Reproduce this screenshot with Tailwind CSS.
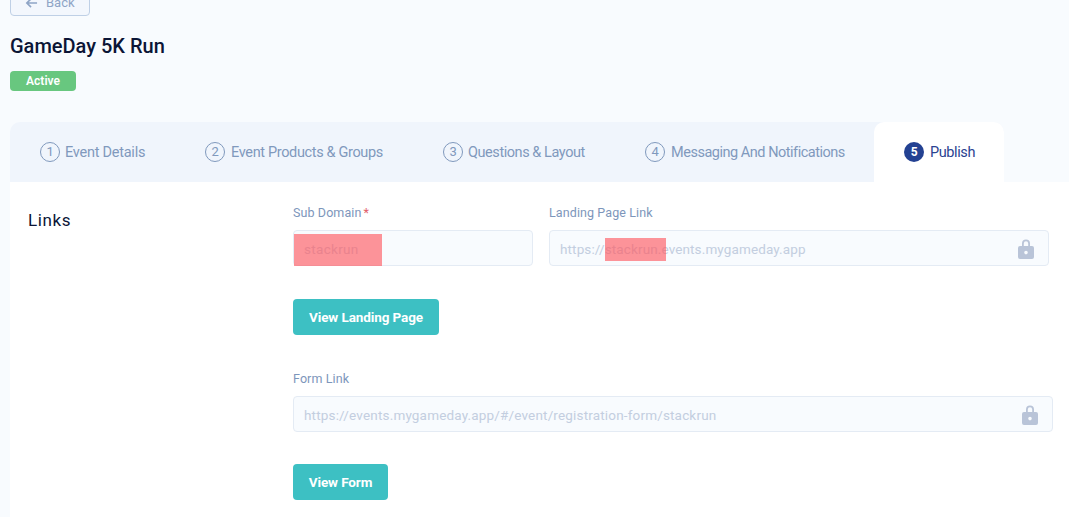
<!DOCTYPE html>
<html lang="en">
<head>
  <meta charset="UTF-8">
  <title>GameDay 5K Run</title>
  <script src="https://cdn.jsdelivr.net/npm/@tailwindcss/browser@4"></script>
</head>
<body class="bg-[#f8fbfe] font-['Roboto',sans-serif] h-[517px] overflow-hidden">

  <!-- page header -->
  <div class="pl-[10px]">
    <button class="mt-[-12px] h-[28px] w-[80px] flex items-center gap-[8px] pl-[14px] pt-[2px] border border-[#bfd0e6] rounded-[4px] bg-[#f3f7fd] text-[#8fa5c6] text-[13px]">
      <svg width="13" height="12" viewBox="0 0 14 12" fill="none" stroke="#8fa5c6" stroke-width="1.8"><path d="M13 6H2M6.500 1.500L2 6l4.500 4.500"/></svg>
      <span>Back</span>
    </button>
    <h1 class="mt-[18px] h-[24px] leading-[24px] text-[20px] font-medium text-[#0b1536]">GameDay 5K Run</h1>
    <span class="mt-[13px] flex items-center justify-center w-[66px] h-[20px] rounded-[4px] bg-[#68c77f] text-white text-[12px] font-semibold">Active</span>
  </div>

  <!-- tabs -->
  <div class="mt-[31px] ml-[10px] w-[994px] h-[60px] flex bg-[#f0f5fc] rounded-t-[10px] text-[14.500px] text-[#8099bd]">
    <div class="px-[30px] w-[165px] flex items-center gap-[5px] whitespace-nowrap tracking-[-0.25px]">
      <span class="w-[20px] h-[20px] shrink-0 rounded-full border border-[#8099bd] flex items-center justify-center text-[13px]">1</span><span class="translate-y-px">Event Details</span>
    </div>
    <div class="px-[30px] w-[238px] flex items-center gap-[6px] whitespace-nowrap tracking-[-0.35px]">
      <span class="w-[20px] h-[20px] shrink-0 rounded-full border border-[#8099bd] flex items-center justify-center text-[13px]">2</span><span class="translate-y-px">Event Products &amp; Groups</span>
    </div>
    <div class="px-[30px] w-[202px] flex items-center gap-[5px] whitespace-nowrap tracking-[-0.44px]">
      <span class="w-[20px] h-[20px] shrink-0 rounded-full border border-[#8099bd] flex items-center justify-center text-[13px]">3</span><span class="translate-y-px">Questions &amp; Layout</span>
    </div>
    <div class="px-[30px] w-[259px] flex items-center gap-[6px] whitespace-nowrap tracking-[-0.48px]">
      <span class="w-[20px] h-[20px] shrink-0 rounded-full border border-[#8099bd] flex items-center justify-center text-[13px]">4</span><span class="translate-y-px">Messaging And Notifications</span>
    </div>
    <div class="px-[30px] w-[130px] flex items-center gap-[6px] whitespace-nowrap tracking-[-0.4px] bg-white rounded-t-[10px] text-[#2a4391]">
      <span class="w-[20px] h-[20px] shrink-0 rounded-full bg-[#234192] text-white flex items-center justify-center text-[12px] font-bold">5</span><span class="translate-y-px">Publish</span>
    </div>
  </div>

  <!-- panel -->
  <div class="ml-[10px] h-[335px] bg-white pl-[18px] flex">
    <div class="w-[265px] pt-[28px] text-[17px] leading-[20px] tracking-[0.6px] text-[#0b1536]">Links</div>
    <div class="pt-[22px]">
      <div class="flex gap-[16px]">
        <div class="w-[240px]">
          <label class="block h-[18px] leading-[18px] text-[12.500px] tracking-[0.1px] text-[#7d96bb]">Sub Domain<span class="ml-[2px] text-[#e2606a]">*</span></label>
          <div class="relative mt-[8px] h-[36px] flex items-center pl-[10px] border border-[#e4ebf4] rounded-[4px] bg-[#f8fbfe] text-[13.500px] tracking-[0.3px] text-[#c3cee0]">
            <span class="translate-y-px">stackrun</span>
            <span class="absolute left-0 top-[3px] w-[88px] h-[32px] bg-[#fe5a63]/65"></span>
          </div>
        </div>
        <div class="w-[500px]">
          <label class="block h-[18px] leading-[18px] text-[12.500px] tracking-[0.1px] text-[#7d96bb]">Landing Page Link</label>
          <div class="relative mt-[8px] h-[36px] flex items-center justify-between pl-[10px] pr-[14px] border border-[#e4ebf4] rounded-[4px] bg-[#f8fbfe] text-[13.500px] tracking-[0.12px] text-[#c3cee0]">
            <span class="translate-y-px">https://stackrun.events.mygameday.app</span>
            <svg width="16" height="21" viewBox="0 0 16 21" fill="#b9c4d8"><path d="M4 8V5.500a4 4 0 0 1 8 0V8h-1.800V5.500a2.200 2.200 0 0 0-4.400 0V8z"/><path fill-rule="evenodd" d="M2 8h12a2 2 0 0 1 2 2v9a2 2 0 0 1-2 2H2a2 2 0 0 1-2-2v-9a2 2 0 0 1 2-2zm6 4.800a1.800 1.800 0 1 0 0 3.600 1.800 1.800 0 0 0 0-3.600z"/></svg>
            <span class="absolute left-[55px] top-[7px] w-[61px] h-[23px] bg-[#fe5a63]/65"></span>
          </div>
        </div>
      </div>
      <button class="mt-[33px] block w-[146px] h-[36px] rounded-[4px] bg-[#3dc0c3] text-white text-[13.500px] font-bold tracking-[-0.1px]">View Landing Page</button>

      <label class="mt-[35px] block h-[18px] leading-[18px] text-[12.500px] tracking-[0.1px] text-[#7d96bb]">Form Link</label>
      <div class="mt-[8px] w-[760px] h-[36px] flex items-center justify-between pl-[10px] pr-[14px] border border-[#e4ebf4] rounded-[4px] bg-[#f8fbfe] text-[13.500px] tracking-[0.17px] text-[#c3cee0]">
        <span class="translate-y-px">https://events.mygameday.app/#/event/registration-form/stackrun</span>
        <svg width="16" height="21" viewBox="0 0 16 21" fill="#b9c4d8"><path d="M4 8V5.500a4 4 0 0 1 8 0V8h-1.800V5.500a2.200 2.200 0 0 0-4.400 0V8z"/><path fill-rule="evenodd" d="M2 8h12a2 2 0 0 1 2 2v9a2 2 0 0 1-2 2H2a2 2 0 0 1-2-2v-9a2 2 0 0 1 2-2zm6 4.800a1.800 1.800 0 1 0 0 3.600 1.800 1.800 0 0 0 0-3.600z"/></svg>
      </div>
      <button class="mt-[32px] block w-[95px] h-[36px] rounded-[4px] bg-[#3dc0c3] text-white text-[13.500px] font-bold tracking-[-0.1px]">View Form</button>
    </div>
  </div>

</body>
</html>
